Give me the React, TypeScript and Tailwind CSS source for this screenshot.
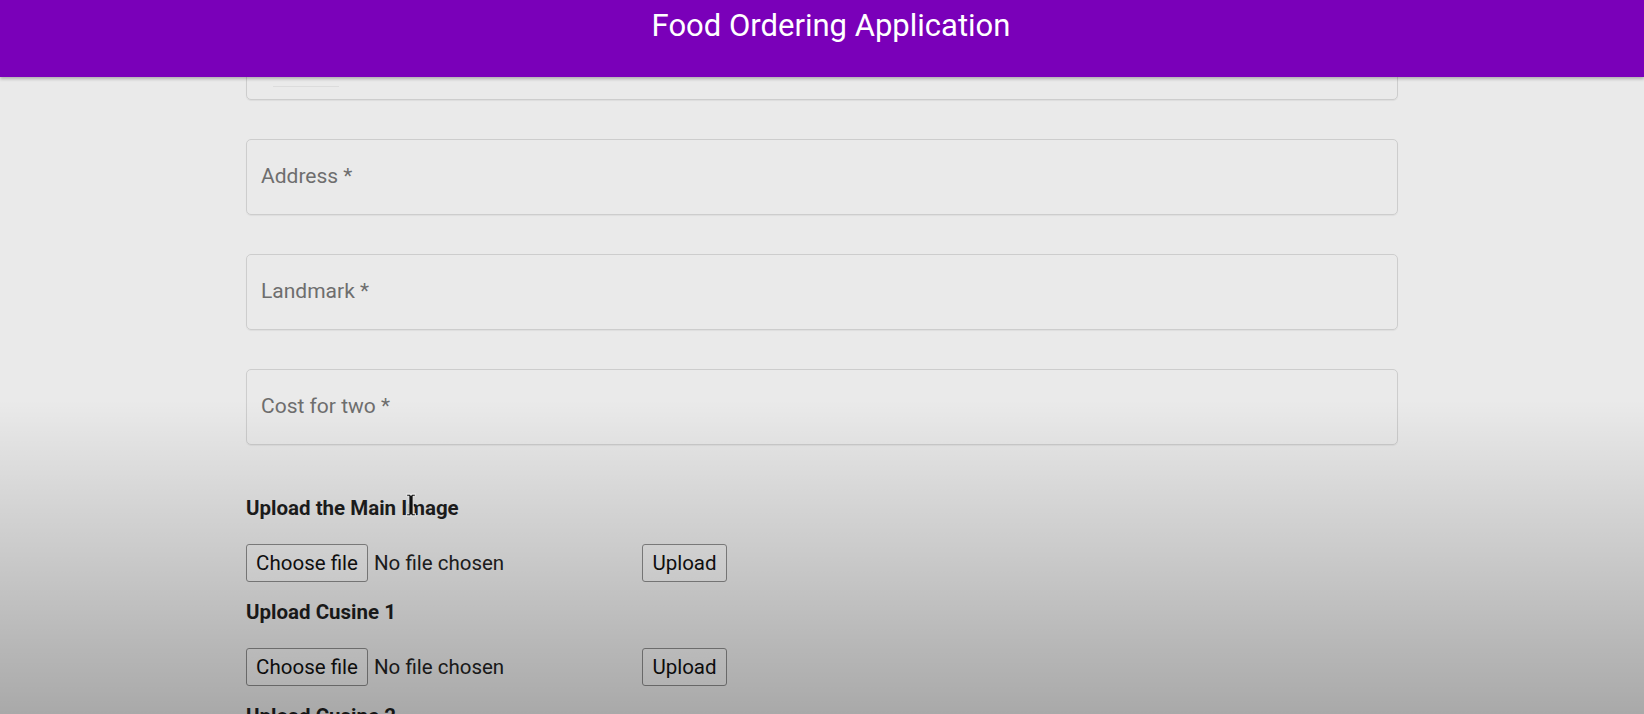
import React from "react";

const fields = ["Address *", "Landmark *", "Cost for two *"];
const uploads = ["Upload the Main Image", "Upload Cusine 1", "Upload Cusine 2"];

function FileRow() {
  return (
    <div className="flex items-center h-[38px]">
      <div className="flex items-center w-[396px]">
        <button className="h-[38px] w-[122px] border border-[#8a8a8a] rounded-[3px] bg-[#efefef] text-[20.5px] text-[#111]">
          Choose file
        </button>
        <span className="ml-[6px] text-[20.5px] text-[#222]">No file chosen</span>
      </div>
      <button className="h-[38px] w-[85px] border border-[#8a8a8a] rounded-[3px] bg-[#efefef] text-[20.5px] text-[#111]">
        Upload
      </button>
    </div>
  );
}

export default function App() {
  return (
    <div
      className="relative h-[714px] w-full overflow-hidden bg-[#eaeaea]"
      style={{ fontFamily: "Roboto, 'Liberation Sans', sans-serif" }}
    >
      <header className="absolute top-0 left-0 right-0 z-10 h-[77px] bg-[#7a00b9] shadow-[0_2px_3px_rgba(0,0,0,0.25)] flex justify-center pl-[18px]">
        <h1 className="mt-[7px] text-[31px] leading-[38px] text-white font-normal">
          Food Ordering Application
        </h1>
      </header>

      <main className="w-[1152px] mx-auto pt-[24px] flex flex-col">
        <div className="flex flex-col gap-[39px]">
          <div className="h-[76px] border border-[#cdcdcd] rounded-[5px] shadow-[0_1px_1px_rgba(0,0,0,0.06)] relative">
            <div className="absolute left-[26px] top-[61px] w-[66px] h-px bg-[#dcdcdc]" />
          </div>
          {fields.map((label) => (
            <div
              key={label}
              className="h-[76px] border border-[#cdcdcd] rounded-[5px] flex items-center pl-[14px] shadow-[0_1px_1px_rgba(0,0,0,0.05)]"
            >
              <span className="text-[21px] text-[#6e6e6e]">{label}</span>
            </div>
          ))}
        </div>

        <div className="mt-[49px] flex flex-col">
          {uploads.map((label) => (
            <div key={label} className="flex flex-col h-[104px]">
              <div className="relative h-[28px] leading-[28px] text-[20.5px] font-bold text-[#1e1e1e]">
                {label}
              </div>
              <div className="mt-[22px]">
                <FileRow />
              </div>
            </div>
          ))}
        </div>
      </main>

      {/* text cursor */}
      <svg
        className="absolute left-[404px] top-[493px] z-20"
        width="14"
        height="24"
        viewBox="0 0 12 22"
      >
        <path
          d="M2 1h3l1 1 1-1h3v2H8v16h2v2H7l-1-1-1 1H2v-2h2V3H2z"
          fill="#111"
          stroke="#fff"
          strokeWidth="1"
        />
      </svg>

      <div className="pointer-events-none absolute inset-0 z-30 bg-[linear-gradient(to_bottom,transparent_56%,rgba(0,0,0,0.28)_100%)]" />
    </div>
  );
}
